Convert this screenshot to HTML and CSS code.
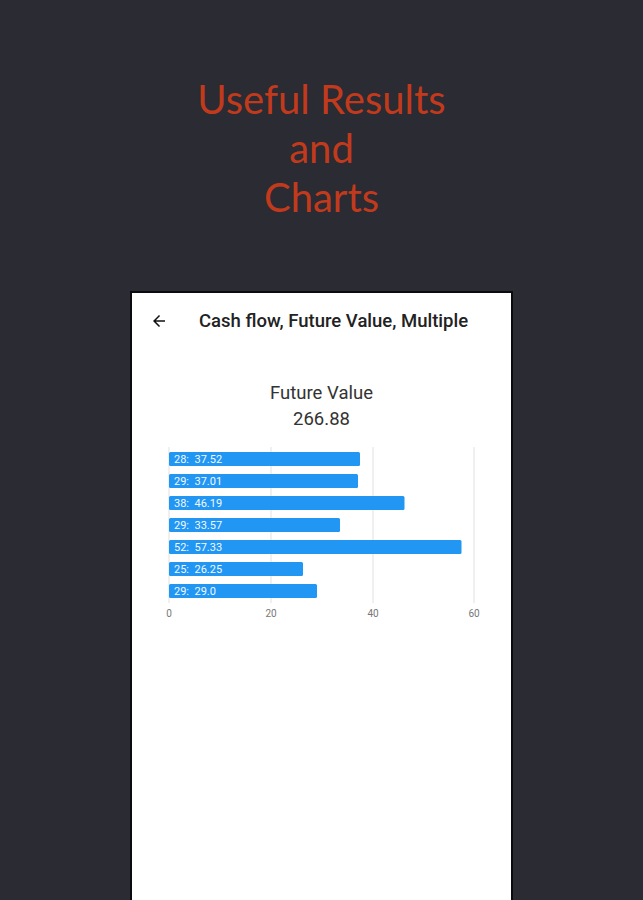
FILE: index.html
```html
<!DOCTYPE html>
<html>
<head>
<meta charset="utf-8">
<link rel="stylesheet" href="styles.css">
</head>
<body>
<div class="headline">
  <div>Useful Results</div>
  <div>and</div>
  <div>Charts</div>
</div>
<div class="phone">
  <div class="appbar">
    <svg class="back" width="18" height="18" viewBox="0 0 24 24"><path d="M20 11H7.83l5.59-5.59L12 4l-8 8 8 8 1.41-1.41L7.83 13H20v-2z" fill="#111"/></svg>
    <div class="apptitle">Cash flow, Future Value, Multiple</div>
  </div>
  <div class="summary">
    <div>Future Value</div>
    <div>266.88</div>
  </div>
  <svg class="chart" width="330" height="190" viewBox="0 0 330 190">
    <g stroke="#ebebeb" stroke-width="1.5">
      <line x1="9" y1="7" x2="9" y2="163"/>
      <line x1="111" y1="7" x2="111" y2="163"/>
      <line x1="213" y1="7" x2="213" y2="163"/>
      <line x1="314" y1="7" x2="314" y2="163"/>
    </g>
    <g fill="#2196f3">
      <rect x="9" y="12" width="191" height="14" rx="1.5"/>
      <rect x="9" y="34" width="189" height="14" rx="1.5"/>
      <rect x="9" y="56" width="235.5" height="14" rx="1.5"/>
      <rect x="9" y="78" width="171" height="14" rx="1.5"/>
      <rect x="9" y="100" width="292.5" height="14" rx="1.5"/>
      <rect x="9" y="122" width="134" height="14" rx="1.5"/>
      <rect x="9" y="144" width="148" height="14" rx="1.5"/>
    </g>
    <g class="barlabel" fill="#f4f8fc">
      <text x="14" y="23">28:&#160;&#160;37.52</text>
      <text x="14" y="45">29:&#160;&#160;37.01</text>
      <text x="14" y="67">38:&#160;&#160;46.19</text>
      <text x="14" y="89">29:&#160;&#160;33.57</text>
      <text x="14" y="111">52:&#160;&#160;57.33</text>
      <text x="14" y="133">25:&#160;&#160;26.25</text>
      <text x="14" y="155">29:&#160;&#160;29.0</text>
    </g>
    <g class="axis" fill="#777" text-anchor="middle">
      <text x="9" y="177">0</text>
      <text x="111" y="177">20</text>
      <text x="213" y="177">40</text>
      <text x="314" y="177">60</text>
    </g>
  </svg>
</div>
</body>
</html>
```
FILE: styles.css
```css
html, body {
  margin: 0;
  padding: 0;
  background: #2a2b33;
  height: 900px;
  overflow: hidden;
}
.headline {
  padding-top: 75px;
  text-align: center;
  font-family: Lato, "Open Sans", sans-serif;
  font-size: 40px;
  line-height: 49px;
  color: #c23a1c;
  height: 141px;
}
.phone {
  margin-top: 75px;
  margin-left: 130px;
  width: 379px;
  height: 610px;
  background: #fff;
  border: 2px solid #0b0b0e;
  border-bottom: none;
  font-family: Roboto, "Noto Sans", sans-serif;
}
.appbar {
  height: 56px;
  display: flex;
  align-items: center;
  padding-left: 18px;
}
.back {
  width: 18px;
  height: 18px;
}
.apptitle {
  margin-left: 31px;
  font-size: 18.5px;
  font-weight: 500;
  color: #222;
}
.summary {
  margin-top: 31px;
  text-align: center;
  font-size: 18.5px;
  line-height: 26px;
  color: #333;
}
.chart {
  display: block;
  margin-top: 8px;
  margin-left: 28px;
}
.barlabel text {
  font-family: Roboto, sans-serif;
  font-size: 11px;
}
.axis text {
  font-family: Roboto, sans-serif;
  font-size: 10px;
}
```
